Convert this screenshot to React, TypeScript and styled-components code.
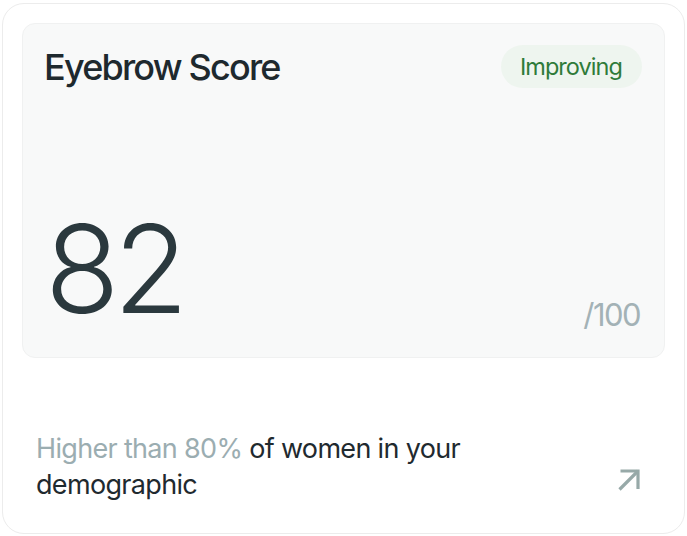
import * as React from 'react';
import styled, { createGlobalStyle } from 'styled-components';

const GlobalStyle = createGlobalStyle`
  html, body {
    margin: 0;
    padding: 0;
    background: #ffffff;
  }
  body {
    font-family: Inter, 'Noto Sans', 'Liberation Sans', sans-serif;
    -webkit-font-smoothing: antialiased;
  }
  #root {
    padding: 3px 2px 2px 2px;
  }
`;

const Card = styled.div`
  box-sizing: border-box;
  height: 531px;
  border: 1px solid #ececec;
  border-radius: 22px;
  background: #ffffff;
  padding: 19px;
  display: flex;
  flex-direction: column;
`;

const Panel = styled.section`
  box-sizing: border-box;
  height: 335px;
  background: #f8f9f9;
  border: 1px solid #f0f1f1;
  border-radius: 13px;
  padding: 21px 22px 27px 21px;
  display: flex;
  flex-direction: column;
`;

const Header = styled.div`
  display: flex;
  justify-content: space-between;
  align-items: flex-start;
`;

const Title = styled.h2`
  margin: 1px 0 0 0;
  font-size: 36px;
  font-weight: 500;
  letter-spacing: -0.05em;
  line-height: 42px;
  color: #1e292e;
`;

const Badge = styled.span`
  display: inline-flex;
  align-items: center;
  justify-content: center;
  height: 43px;
  padding: 0 20px 0 19px;
  border-radius: 22px;
  background: #eef5ef;
  color: #2f7b3a;
  font-size: 23.5px;
  font-weight: 400;
  letter-spacing: -0.04em;
`;

const ScoreRow = styled.div`
  margin-top: auto;
  display: flex;
  justify-content: space-between;
  align-items: flex-end;
`;

const Score = styled.span`
  font-size: 122px;
  font-weight: 300;
  letter-spacing: -0.05em;
  line-height: 100px;
  color: #2b393e;
  margin: 0 0 11px 1px;
`;

const OutOf = styled.span`
  font-size: 31px;
  font-weight: 400;
  letter-spacing: -0.05em;
  line-height: 30px;
  color: #a3b2b6;
  margin-right: 2px;
`;

const Footer = styled.div`
  flex: 1;
  display: flex;
  justify-content: space-between;
  align-items: flex-end;
  padding: 0 24px 11px 14px;
`;

const Summary = styled.p`
  margin: 0;
  max-width: 470px;
  font-size: 27px;
  font-weight: 400;
  letter-spacing: -0.025em;
  line-height: 36px;
  color: #1f2a2f;
`;

const Muted = styled.span`
  color: #9badb1;
`;

const ArrowLink = styled.a`
  display: flex;
  width: 24px;
  height: 24px;
  margin-bottom: 11px;
  color: #97a9a8;
`;

function ArrowUpRight() {
  return (
    <svg width="24" height="24" viewBox="0 0 24 24" fill="none">
      <path d="M2.5 21.5 L21 3" stroke="currentColor" strokeWidth="3.2" />
      <path d="M3.5 3 H21 V21" stroke="currentColor" strokeWidth="3.2" />
    </svg>
  );
}

export default function App() {
  return (
    <>
      <GlobalStyle />
      <Card>
        <Panel>
          <Header>
            <Title>Eyebrow Score</Title>
            <Badge>Improving</Badge>
          </Header>
          <ScoreRow>
            <Score>82</Score>
            <OutOf>/100</OutOf>
          </ScoreRow>
        </Panel>
        <Footer>
          <Summary>
            <Muted>Higher than 80%</Muted> of women in your demographic
          </Summary>
          <ArrowLink href="#" aria-label="Open details">
            <ArrowUpRight />
          </ArrowLink>
        </Footer>
      </Card>
    </>
  );
}
